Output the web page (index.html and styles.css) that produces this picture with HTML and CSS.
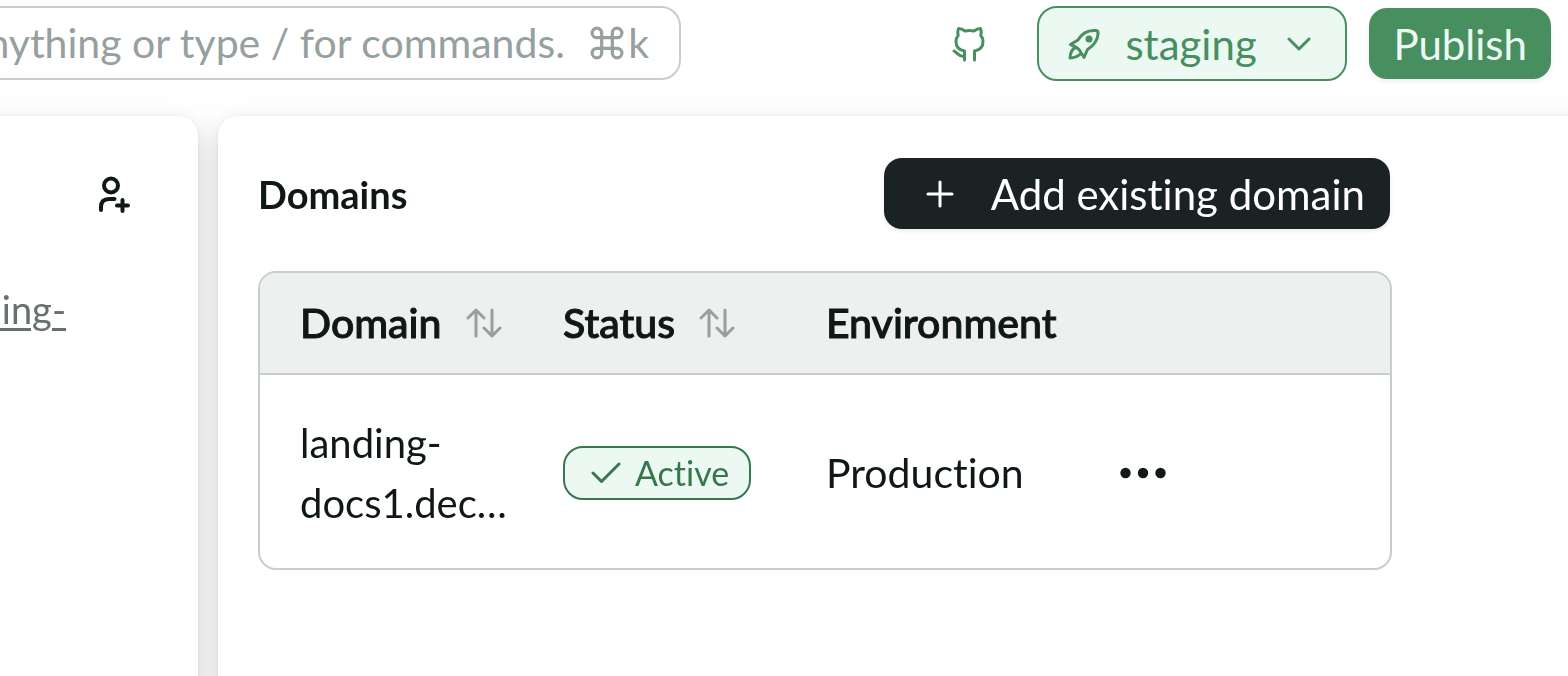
FILE: index.html
```html
<!DOCTYPE html>
<html lang="en">
<head>
<meta charset="utf-8">
<meta name="viewport" content="width=device-width, initial-scale=1">
<title>Domains</title>
<link rel="stylesheet" href="styles.css">
</head>
<body>
<header class="topbar">
  <label class="search">
    <input class="search-input" type="text" aria-label="Search" placeholder="anything or type / for commands.">
    <span class="shortcut"><svg class="cmd" viewBox="0 0 32 32" aria-hidden="true"><path d="M11 11V6.500A4.500 4.500 0 1 0 6.500 11H25.500A4.500 4.500 0 1 0 21 6.500V25.500A4.500 4.500 0 1 0 25.500 21H6.500A4.500 4.500 0 1 0 11 25.500Z"/></svg>k</span>
  </label>
  <div class="actions">
    <button class="icon-button github" aria-label="GitHub"><svg class="icon-github" viewBox="0 0 36 36" aria-hidden="true"><path d="M13.500 34V25C8 24 5 21 5 15.500C5 13 5.800 11 7.200 9.500C6.500 7 6.500 5 7.500 2.500C10 2.500 12 3.500 14 5Q18.500 4 23 5C25 3.500 27 2.500 29.500 2.500C30.500 5 30.500 7 29.800 9.500C31.200 11 32 13 32 15.500C32 21 29 24 23.500 25V34M13.500 30C8 31.500 7 27 3 25"/></svg></button>
    <label class="environment">
      <svg class="icon-rocket" viewBox="0 0 32 32" aria-hidden="true"><path d="M2.500 16.500L10 12C14 5 20 1.800 28 2.500Q30.500 3 30 6C29.500 13 26 17.500 19.500 21.500L16 29.500L12 23Q10 19.500 2.500 16.500ZM8 19.500Q2.500 21 2 30Q8 30 13 25.500"/><circle class="fill" cx="21" cy="11" r="3.500"/></svg>
      <select class="environment-select" aria-label="Environment"><option>staging</option></select>
      <svg class="icon-chevron" viewBox="0 0 24 16" aria-hidden="true"><path d="M2 3L12 13L22 3"/></svg>
    </label>
    <button class="button publish">Publish</button>
  </div>
</header>
<div class="panels">
  <aside class="sidebar">
    <button class="icon-button" aria-label="Invite member"><svg class="icon-user" viewBox="0 0 36 40" aria-hidden="true"><circle cx="15" cy="10.500" r="7"/><path d="M5 35V32Q5 24 13 24H18.500M26.500 25V36M21 30.500H32"/></svg></button>
    <a class="site-link" href="#">landing-</a>
  </aside>
  <main class="content">
    <div class="content-head">
      <h1 class="title">Domains</h1>
      <button class="button add"><svg class="icon-plus" viewBox="0 0 28 28" aria-hidden="true"><path d="M14 2V26M2 14H26"/></svg>Add existing domain</button>
    </div>
    <div class="table-frame">
      <table class="domains">
        <colgroup><col class="col"><col class="col"><col class="col"><col></colgroup>
        <thead>
          <tr>
            <th scope="col"><span class="heading">Domain<button class="icon-button" aria-label="Sort by domain"><svg class="icon-sort" viewBox="0 0 36 30" aria-hidden="true"><path d="M10 28V2M2 10L10 2L18 10M26 2V28M18 20L26 28L34 20"/></svg></button></span></th>
            <th scope="col"><span class="heading">Status<button class="icon-button" aria-label="Sort by status"><svg class="icon-sort" viewBox="0 0 36 30" aria-hidden="true"><path d="M10 28V2M2 10L10 2L18 10M26 2V28M18 20L26 28L34 20"/></svg></button></span></th>
            <th scope="col">Environment</th>
            <td></td>
          </tr>
        </thead>
        <tbody>
          <tr>
            <td class="domain-name">landing-<br>docs1.dec…</td>
            <td><span class="badge"><svg class="icon-check" viewBox="0 0 30 24" aria-hidden="true"><path d="M2 12L10.500 20.500L28 3"/></svg>Active</span></td>
            <td>Production</td>
            <td class="menu-cell"><button class="icon-button" aria-label="More actions"><svg class="icon-more" viewBox="0 0 46 12" aria-hidden="true"><circle cx="5.500" cy="6" r="5.200"/><circle cx="23" cy="6" r="5.200"/><circle cx="40.500" cy="6" r="5.200"/></svg></button></td>
          </tr>
        </tbody>
      </table>
    </div>
  </main>
</div>
</body>
</html>
```
FILE: styles.css
```css
* { box-sizing: border-box; }
body {
  margin: 0;
  min-height: 100vh;
  display: flex;
  flex-direction: column;
  overflow: hidden;
  background: #fff;
  color: #101817;
  font: 400 42px/60px Lato, "Noto Sans", sans-serif;
  font-variant-ligatures: none;
}
button, input, select { font: inherit; font-variant-ligatures: none; color: inherit; }
button { cursor: pointer; }
svg {
  display: block;
  flex: none;
  fill: none;
  stroke: currentColor;
  stroke-width: 3;
  stroke-linecap: round;
  stroke-linejoin: round;
}
.icon-button { padding: 0; border: 0; background: none; display: flex; }

.topbar {
  display: flex;
  align-items: flex-start;
  justify-content: space-between;
  padding: 6px 17px 35px 0;
}
.search {
  display: flex;
  align-items: center;
  gap: 20px;
  width: 741px;
  height: 74px;
  margin-left: -60px;
  padding: 0 30px 0 24px;
  border: 2px solid #c8cecc;
  border-radius: 20px;
  color: #96a09d;
  font-size: 41px;
}
.search-input {
  flex: 1;
  min-width: 0;
  padding: 0;
  border: 0;
  outline: 0;
  background: none;
  appearance: none;
}
.search-input::placeholder { color: #96a09d; opacity: 1; }
.shortcut { display: flex; align-items: center; gap: 4px; }
.cmd { width: 34px; height: 34px; }
.actions { display: flex; align-items: center; gap: 22px; }
.github { margin-right: 28px; color: #478f5f; }
.icon-github { width: 36px; height: 36px; }
.environment {
  display: flex;
  align-items: center;
  height: 75px;
  padding: 0 34px 0 29px;
  border: 2px solid #478f5f;
  border-radius: 20px;
  background: #ecf9f3;
  color: #478f5f;
}
.environment-select {
  margin: 0 30px 0 25px;
  padding: 0;
  border: 0;
  outline: 0;
  background: none;
  appearance: none;
}
.icon-rocket { width: 32px; height: 32px; }
.icon-rocket .fill { fill: currentColor; stroke: none; }
.icon-chevron { width: 24px; height: 16px; }
.button {
  display: flex;
  align-items: center;
  height: 71px;
  padding: 0 24px;
  border: 0;
  border-radius: 18px;
  box-shadow: 0 2px 5px rgba(0, 0, 0, 0.08);
}
.publish { background: #478f5f; color: #ecf9f3; }

.panels {
  flex: 1;
  display: flex;
  gap: 20px;
  margin: 0 -60px -60px;
  filter: drop-shadow(0 0 2px rgba(0, 0, 0, 0.06)) drop-shadow(0 10px 14px rgba(0, 0, 0, 0.17));
}
.sidebar {
  display: flex;
  flex-direction: column;
  align-items: flex-end;
  gap: 64px;
  width: 258px;
  padding: 59px 66px 0 0;
  border-radius: 20px;
  background: #fff;
}
.icon-user { width: 36px; height: 40px; stroke-width: 4; }
.site-link { margin-right: 66px; color: #66716e; font-size: 38px; text-underline-offset: 4px; text-decoration-thickness: 3px; }
.content {
  flex: 1;
  padding: 42px 236px 0 40px;
  border-radius: 20px;
  background: #fff;
}
.content-head {
  display: flex;
  align-items: center;
  justify-content: space-between;
  margin-bottom: 42px;
  padding-right: 2px;
}
.title { margin: 0; font-size: 38px; font-weight: 700; }
.add { gap: 37px; padding: 0 25px 0 42px; background: #1b2223; color: #fff; }
.icon-plus { width: 28px; height: 28px; }

.table-frame {
  border: 2px solid #c8cecc;
  border-radius: 18px;
  overflow: hidden;
}
.domains { width: 100%; table-layout: fixed; border-collapse: collapse; font-size: 41px; }
.col { width: 263px; }
.domains th, .domains td { padding: 38px 0 35px 40px; text-align: left; }
.domains thead { background: #eef0ef; border-bottom: 2px solid #c8cecc; }
.domains thead th, .domains thead td { padding-top: 20px; padding-bottom: 20px; font-weight: 500; }
.domains th { -webkit-text-stroke: 1px currentColor; }
.domains .domain-name { font-size: 40px; }
.heading { display: flex; align-items: center; gap: 24px; }
.icon-sort { width: 36px; height: 30px; color: #96a09d; }
.domains .menu-cell { padding-left: 71px; }
.icon-more { width: 46px; height: 12px; fill: currentColor; stroke: none; }
.badge {
  display: flex;
  align-items: center;
  gap: 14px;
  width: fit-content;
  height: 54px;
  padding: 0 20px 0 26px;
  border: 2px solid #38764b;
  border-radius: 20px;
  background: #ecf9f3;
  color: #38764b;
  font-size: 34px;
}
.icon-check { width: 30px; height: 24px; }
```
